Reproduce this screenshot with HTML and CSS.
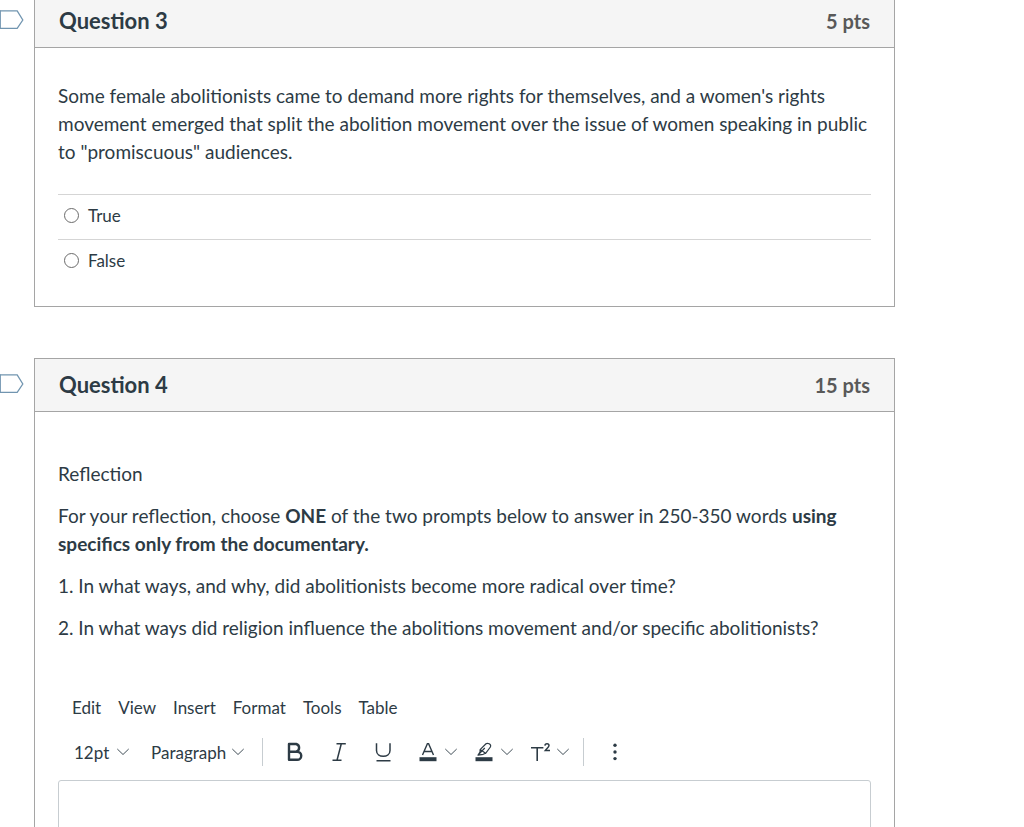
FILE: index.html
```html
<!DOCTYPE html>
<html lang="en">
<head>
<meta charset="utf-8">
<meta name="viewport" content="width=device-width, initial-scale=1">
<title>Quiz</title>
<link rel="stylesheet" href="styles.css">
</head>
<body>
<svg class="sprite" aria-hidden="true">
  <symbol id="flag" viewBox="0 0 24 20"><path d="M-1 .8H17.2L22.8 10L17.2 18.4H-1" fill="#fff" stroke="#7195b0" stroke-width="1.3"/><path d="M.3 .5V18.8" stroke="#7195b0" stroke-width="1.2"/></symbol>
  <symbol id="chevron" viewBox="0 0 12 8"><path d="M.3 1L6 6.5L11.7 1" fill="none" stroke="#2d3b45" stroke-width=".9"/></symbol>
</svg>
<main class="quiz">
  <section class="question">
    <button class="flag" type="button" aria-label="Flag question 3"><svg><use href="#flag"/></svg></button>
    <div class="card">
      <header class="card-header"><h2 class="title">Question 3</h2><span class="points">5 pts</span></header>
      <div class="card-body">
        <p class="text">Some female abolitionists came to demand more rights for themselves, and a women's rights movement emerged that split the abolition movement over the issue of women speaking in public to "promiscuous" audiences.</p>
        <div class="answers">
          <label class="answer"><input class="radio" type="radio" name="q3">True</label>
          <label class="answer"><input class="radio" type="radio" name="q3">False</label>
        </div>
      </div>
    </div>
  </section>
  <section class="question">
    <button class="flag" type="button" aria-label="Flag question 4"><svg><use href="#flag"/></svg></button>
    <div class="card">
      <header class="card-header"><h2 class="title">Question 4</h2><span class="points">15 pts</span></header>
      <div class="card-body essay">
        <p class="text">Reflection</p>
        <p class="text">For your reflection, choose <strong>ONE</strong> of the two prompts below to answer in 250-350 words <strong>using specifics only from the documentary.</strong></p>
        <p class="text">1. In what ways, and why, did abolitionists become more radical over time?</p>
        <p class="text">2. In what ways did religion influence the abolitions movement and/or specific abolitionists?</p>
        <div class="editor">
          <div class="menubar">
            <button type="button">Edit</button>
            <button type="button">View</button>
            <button type="button">Insert</button>
            <button type="button">Format</button>
            <button type="button">Tools</button>
            <button type="button">Table</button>
          </div>
          <div class="toolbar">
            <div class="selects">
              <label class="pick"><select class="size" aria-label="Font size"><option>12pt</option></select><svg class="chevron"><use href="#chevron"/></svg></label>
              <label class="pick"><select class="block" aria-label="Block style"><option>Paragraph</option></select><svg class="chevron"><use href="#chevron"/></svg></label>
            </div>
            <div class="styles">
              <div class="group">
                <button class="tool" type="button" aria-label="Bold"><svg class="icon" viewBox="0 0 18 20"><path d="M3 2H10.2A4 4 0 0 1 10.2 9.7H3ZM3 9.7H11.2A4 4 0 0 1 11.2 17.8H3Z" fill="none" stroke="#2d3b45" stroke-width="2.4" stroke-linejoin="round"/></svg></button>
                <button class="tool" type="button" aria-label="Italic"><svg class="icon" viewBox="0 0 18 20"><path d="M6.5 1.7H15.8M2.5 18.3H11.5M11.3 1.7L7 18.3" fill="none" stroke="#2d3b45" stroke-width="1.5"/></svg></button>
                <button class="tool" type="button" aria-label="Underline"><svg class="icon" viewBox="0 0 18 20"><path d="M2.5 1.3V8.5C2.5 16.3 16 16.3 16 8.5V1.3M2.5 18.7H16.5" fill="none" stroke="#2d3b45" stroke-width="1.5"/></svg></button>
              </div>
              <div class="group menus">
                <button class="tool" type="button" aria-label="Text color"><svg class="icon" viewBox="0 0 18 20"><path d="M3.5 13L8.4 1.6H9.6L14.5 13M5.2 9.5H12.8" fill="none" stroke="#2d3b45" stroke-width="1.4"/><path d="M.5 15.2H17.5V19.2H.5Z" fill="#2d3b45"/></svg><svg class="chevron"><use href="#chevron"/></svg></button>
                <button class="tool" type="button" aria-label="Highlight color"><svg class="icon" viewBox="0 0 18 20"><path d="M5.1 7.6L11 1.8Q12.2 .8 14.2 1.8Q16.3 3 15.4 5L10.6 11.3ZM5.1 7.6L5 10.2L3 13.2L8.2 12.3L10.6 11.3M3 13.2L9.8 6" fill="none" stroke="#2d3b45" stroke-width="1.2" stroke-linejoin="round"/><path d="M.5 15.2H17.5V19.2H.5Z" fill="#2d3b45"/></svg><svg class="chevron"><use href="#chevron"/></svg></button>
                <button class="tool" type="button" aria-label="Superscript"><svg class="icon" viewBox="0 0 18 20"><path d="M0 5.8H12.4M6.2 5.8V19" fill="none" stroke="#2d3b45" stroke-width="1.6"/><path d="M13.9 3.6C14.1 1.1 18 1.1 18 3.6C18 5.3 15.6 6.6 14.2 8.6H19" fill="none" stroke="#2d3b45" stroke-width="1.5"/></svg><svg class="chevron"><use href="#chevron"/></svg></button>
              </div>
            </div>
            <button class="tool more" type="button" aria-label="More"><svg class="icon" viewBox="0 0 18 20"><g fill="#2d3b45"><circle cx="9" cy="3.3" r="1.7"/><circle cx="9" cy="10" r="1.7"/><circle cx="9" cy="16.6" r="1.7"/></g></svg></button>
          </div>
          <textarea class="area" aria-label="Your answer"></textarea>
        </div>
      </div>
    </div>
  </section>
</main>
</body>
</html>
```
FILE: styles.css
```css
* { box-sizing: border-box; }
body {
  margin: 0;
  height: 100vh;
  overflow: hidden;
  background: #fff;
  color: #2d3b45;
  font-family: Lato, "Liberation Sans", sans-serif;
  font-size: 17px;
}
button, select { padding: 0; border: 0; background: none; color: inherit; font: inherit; }
.sprite { display: none; }
.quiz {
  display: flex;
  flex-direction: column;
  gap: 51px;
  margin-top: -6px;
  padding-right: 129px;
}
.question { display: grid; grid-template-columns: 34px minmax(0, 1fr); align-items: start; }
.flag { display: flex; margin-top: 16px; }
.flag svg { width: 24px; height: 20px; }
.card { border: 1px solid #a5a5a5; }
.card-header {
  display: flex;
  align-items: center;
  justify-content: space-between;
  height: 53px;
  padding: 0 24px 1px;
  border-bottom: 1px solid #a5a5a5;
  background: #f5f5f5;
}
.title { margin: 0; font-size: 22px; font-weight: 700; }
.points { color: #595959; font-size: 20px; font-weight: 700; }
.card-body { padding: 34px 23px 22px; }
.text { margin: 0 0 14px; font-size: 19px; line-height: 28px; }
.answers { margin-top: 28px; }
.answer {
  display: flex;
  align-items: center;
  gap: 9px;
  height: 45px;
  padding: 0 0 3px 6px;
  border-top: 1px solid #d5d5d5;
}
.radio {
  appearance: none;
  width: 15px;
  height: 15px;
  margin: 0;
  border: 1px solid #6b6b6b;
  border-radius: 50%;
  background: #fff;
}
.essay { padding-top: 48px; }
.editor { margin-top: 52px; }
.menubar { display: flex; gap: 17px; padding-left: 14px; line-height: 28px; }
.toolbar { display: flex; align-items: center; height: 28px; margin: 16px 0 14px; }
.selects { display: flex; gap: 22px; padding: 0 18px 0 16px; }
.pick { display: flex; align-items: center; gap: 6px; }
.pick select { appearance: none; height: 28px; }
.size { width: 37px; }
.block { width: 75px; }
.chevron { width: 12px; height: 8px; }
.styles {
  display: flex;
  align-items: center;
  gap: 27px;
  height: 28px;
  padding: 0 14px 0 23px;
  border: solid #c7cdd1;
  border-width: 0 1px;
}
.group { display: flex; gap: 26px; }
.menus { gap: 18px; }
.tool { display: flex; align-items: center; gap: 8px; }
.icon { width: 18px; height: 20px; overflow: visible; }
.more { margin-left: 22px; }
.area {
  display: block;
  width: 100%;
  height: 240px;
  border: 1px solid #c7cdd1;
  border-radius: 3px;
  resize: none;
}
```
